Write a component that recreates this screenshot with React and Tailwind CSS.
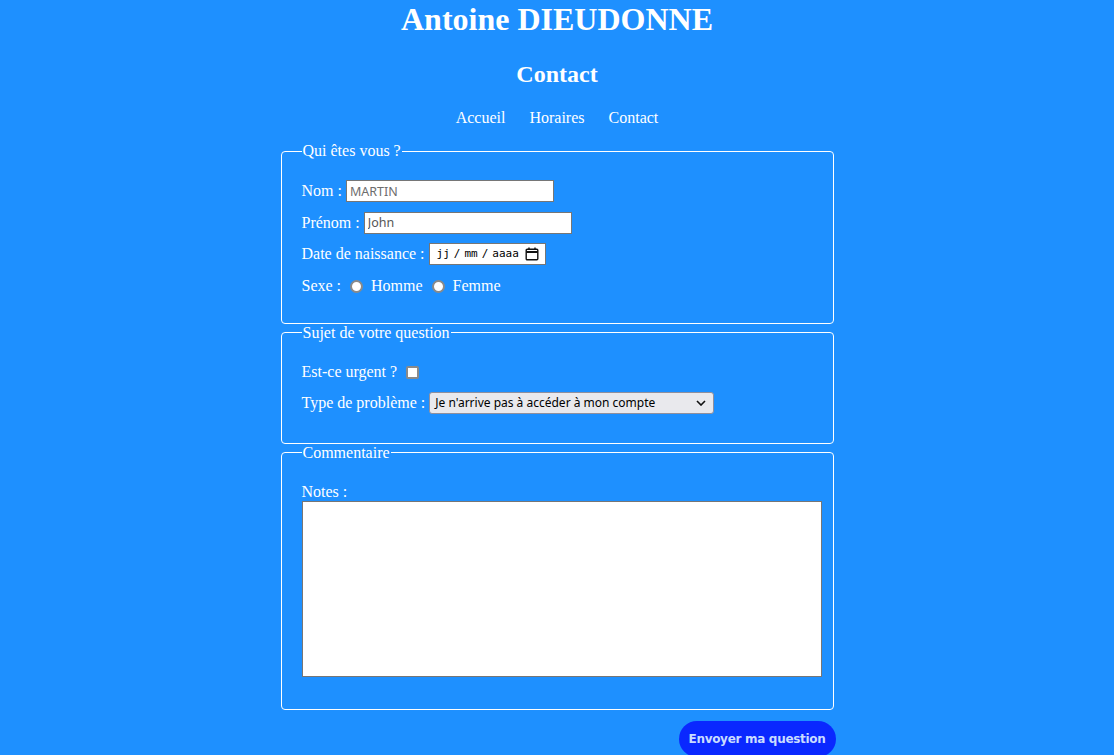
import React from 'react';

const serif = "font-['Liberation_Serif',serif]";
const ui = "font-['Noto_Sans',sans-serif]";

function Row({ children }) {
  return <div className="h-[22px] flex items-center whitespace-pre">{children}</div>;
}

function Radio() {
  return <span className="inline-block shrink-0 w-[13px] h-[13px] rounded-full bg-white border-2 border-[#8a8a8a] ml-[9px] mr-[8px] mt-[1px]"></span>;
}

const App = () => {
  return (
    <div className={`min-h-[755px] bg-[#1e90ff] text-white text-[16px] ${serif}`}>
      <h1 className="text-[32px] font-bold text-center leading-[37px] pt-[1px] mb-[22px]">Antoine DIEUDONNE</h1>
      <h2 className="text-[24px] font-bold text-center leading-[28px]">Contact</h2>
      <nav className="flex justify-center gap-[24px] mt-[21px] leading-[18px]">
        <a href="#">Accueil</a>
        <a href="#">Horaires</a>
        <a href="#">Contact</a>
      </nav>

      <form className="w-[553px] mx-auto mt-[15px]">
        <fieldset className="border border-white rounded-[4px] px-[20px] pt-[20px] pb-[26px]">
          <legend className="leading-[18px] px-[1px]">Qui êtes vous ?</legend>
          <div className="flex flex-col gap-[9.5px]">
            <Row>
              <span>Nom : </span>
              <input
                type="text"
                placeholder="MARTIN"
                className={`w-[208px] h-[22px] bg-white border border-[#767676] px-[3px] text-[12.5px] text-black placeholder:text-[#6d6d6d] ${ui}`}
              />
            </Row>
            <Row>
              <span>Prénom : </span>
              <input
                type="text"
                placeholder="John"
                className={`w-[208px] h-[22px] bg-white border border-[#767676] px-[3px] text-[12.5px] text-black placeholder:text-[#555555] ${ui}`}
              />
            </Row>
            <Row>
              <span>Date de naissance : </span>
              <div className="w-[117px] h-[22px] bg-white border border-[#767676] flex items-center pl-[7px] pr-[6px] text-black text-[11px] font-['DejaVu_Sans_Mono',monospace]">
                <div className="flex gap-[4px]">
                  <span>jj</span>
                  <span>/</span>
                  <span>mm</span>
                  <span>/</span>
                  <span>aaaa</span>
                </div>
                <svg className="ml-auto" width="14" height="14" viewBox="0 0 14 14" fill="none" stroke="#111" strokeWidth="1.4">
                  <rect x="1.2" y="2.2" width="11.6" height="10.6" rx="1" />
                  <line x1="1.2" y1="5" x2="12.8" y2="5" strokeWidth="2" />
                  <line x1="4" y1="0.5" x2="4" y2="2.5" />
                  <line x1="10" y1="0.5" x2="10" y2="2.5" />
                </svg>
              </div>
            </Row>
            <Row>
              <span>Sexe :</span>
              <Radio />
              <span>Homme</span>
              <Radio />
              <span>Femme</span>
            </Row>
          </div>
        </fieldset>

        <fieldset className="border border-white rounded-[4px] px-[20px] pt-[19px] pb-[29px]">
          <legend className="leading-[18px] px-[1px]">Sujet de votre question</legend>
          <div className="flex flex-col gap-[9px]">
            <Row>
              <span>Est-ce urgent ?</span>
              <span className="inline-block shrink-0 w-[13px] h-[13px] rounded-[2px] bg-white border-2 border-[#8a8a8a] ml-[9px] mt-[1px]"></span>
            </Row>
            <Row>
              <span>Type de problème : </span>
              <div className={`w-[285px] h-[22px] bg-[#e9e9ed] border border-[#8f8f9d] rounded-[3px] flex items-center pl-[5px] pr-[7px] text-black text-[12px] ${ui}`}>
                <span className="whitespace-nowrap">Je n'arrive pas à accéder à mon compte</span>
                <svg className="ml-auto shrink-0" width="10" height="6" viewBox="0 0 10 6" fill="none" stroke="#111" strokeWidth="1.6">
                  <polyline points="1,1 5,5 9,1" />
                </svg>
              </div>
            </Row>
          </div>
        </fieldset>

        <fieldset className="border border-white rounded-[4px] pl-[20px] pr-[11px] pt-[21px] pb-[32px]">
          <legend className="leading-[18px] px-[1px]">Commentaire</legend>
          <label className="block leading-[18px]">Notes :</label>
          <textarea className="block w-full h-[176px] bg-white border border-[#767676] text-black resize-none"></textarea>
        </fieldset>

        <div className="flex justify-end mt-[11px] -mr-[2px]">
          <button
            type="button"
            className="h-[36px] px-[10px] rounded-full bg-[#0a28ff] text-[#c9dcff] text-[12px] tracking-[-0.3px] font-bold font-['DejaVu_Sans',sans-serif]"
          >
            Envoyer ma question
          </button>
        </div>
      </form>
    </div>
  );
};

export default App;
